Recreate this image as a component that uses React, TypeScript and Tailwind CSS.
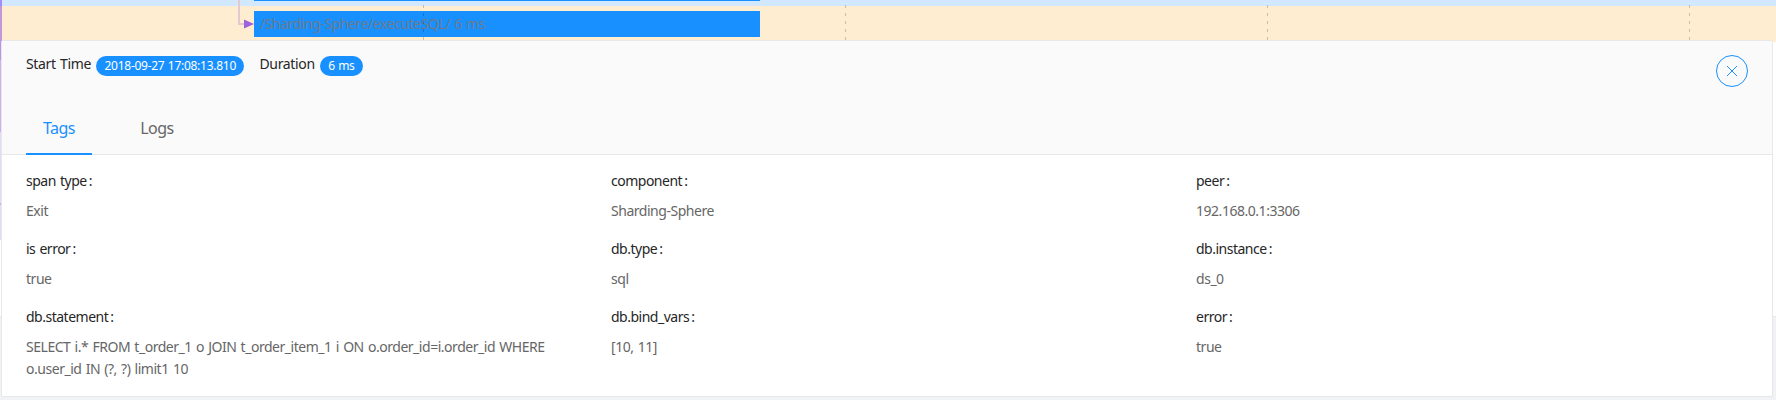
const entries = [
  ["span type", "Exit"],
  ["component", "Sharding-Sphere"],
  ["peer", "192.168.0.1:3306"],
  ["is error", "true"],
  ["db.type", "sql"],
  ["db.instance", "ds_0"],
  ["db.statement", "SELECT i.* FROM t_order_1 o JOIN t_order_item_1 i ON o.order_id=i.order_id WHERE o.user_id IN (?, ?) limit1 10"],
  ["db.bind_vars", "[10, 11]"],
  ["error", "true"],
];

const gridLines = [423, 845, 1267, 1689];

function Timeline() {
  return (
    <div className="relative h-[42px] w-full shrink-0 bg-[#feedd0]">
      <div className="h-[6px] bg-[#d1e8ff]" />
      <div className="absolute left-[254px] top-0 h-px w-[506px] bg-[#1890ff]" />
      <div className="absolute left-[254px] top-[11px] h-[26px] w-[506px] bg-[#1890ff]" />
      <div className="absolute left-[260px] top-[11px] text-[14px] leading-[26px] tracking-[-0.44px] whitespace-nowrap text-[#6c7b8b]">
        /Sharding-Sphere/executeSQL/ 6 ms
      </div>
      <svg className="absolute left-0 top-0" width="1776" height="42">
        <path d="M239 0V24H246" fill="none" stroke="#e4c9d3" strokeWidth="2" />
        <path d="M244 19.5L254 24L244 28.5Z" fill="#9d62dc" />
        {gridLines.map((x) => (
          <path key={x} d={`M${x + 0.5} 5V40`} stroke="#000" strokeOpacity="0.2" strokeDasharray="3 5" />
        ))}
      </svg>
    </div>
  );
}

function Badge({ children }: { children: string }) {
  return (
    <span className="mt-px flex h-5 items-center rounded-full bg-[#1890ff] px-[8.5px] text-[12px] tracking-[-0.27px] [word-spacing:0.5px] text-white">
      {children}
    </span>
  );
}

export default function App() {
  return (
    <div className="relative flex h-[400px] w-[1776px] flex-col overflow-hidden bg-[#f0f2f5] font-['Noto_Sans','Noto_Sans_CJK_SC',sans-serif] text-[14px] tracking-[-0.5px] [word-spacing:1px]">
      <Timeline />
      <div className="h-[275px] border-b border-[#e8e8e8] bg-white" />
      <div className="absolute left-0 top-0 flex w-[2px] flex-col">
        <div className="h-[6px] bg-[#a78bf5]" />
        <div className="h-[34px] bg-[#c497d8]" />
        <div className="h-[20px] bg-[#bb93ec]" />
        <div className="h-[72px] bg-[#ccb0f5]" />
        <div className="h-[71px] bg-[#e6d8f9]" />
        <div className="h-[2px] bg-[#ccb0f5]" />
        <div className="h-[35px] bg-[#e6d8f9]" />
      </div>
      <section className="absolute left-px top-[40px] flex h-[357px] w-[1772px] flex-col rounded-[2px] border border-[#e8e8e8] bg-white">
        <header className="flex h-[114px] flex-col justify-between border-b border-[#e8e8e8] bg-[#fafafa] pl-6 pr-6">
          <div className="flex justify-between pt-[14px]">
            <div className="flex text-[#262626]">
              <span className="mr-[5px] w-[65px] leading-[18px] tracking-[-0.35px] whitespace-nowrap">Start Time</span>
              <Badge>2018-09-27 17:08:13.810</Badge>
              <span className="ml-[15px] mr-[5px] leading-[18px] tracking-[-0.35px]">Duration</span>
              <Badge>6 ms</Badge>
            </div>
            <button className="flex size-8 items-center justify-center rounded-full border border-[#1890ff]">
              <svg width="12" height="12" viewBox="0 0 12 12" fill="none" stroke="#1890ff">
                <path d="M1 1L11 11M11 1L1 11" />
              </svg>
            </button>
          </div>
          <nav className="-mb-px flex gap-8 text-[16px] leading-6">
            <div className="h-[46px] w-[66px] border-b-2 border-[#1890ff] pt-[7px] text-center text-[#1890ff]">Tags</div>
            <div className="h-[46px] w-[66px] pt-[7px] text-center text-[#666]">Logs</div>
          </nav>
        </header>
        <dl className="grid grid-cols-[585px_585px_540px] pl-6 pt-[15px]">
          {entries.map(([term, detail]) => (
            <div key={term} className="min-h-[68px] w-[540px]">
              <dt className="leading-[22px] text-[#262626]">{term}<span className="ml-[2px]">:</span></dt>
              <dd className="mt-[8px] leading-[22px] tracking-[-0.47px] text-[#666]">{detail}</dd>
            </div>
          ))}
        </dl>
      </section>
    </div>
  );
}
